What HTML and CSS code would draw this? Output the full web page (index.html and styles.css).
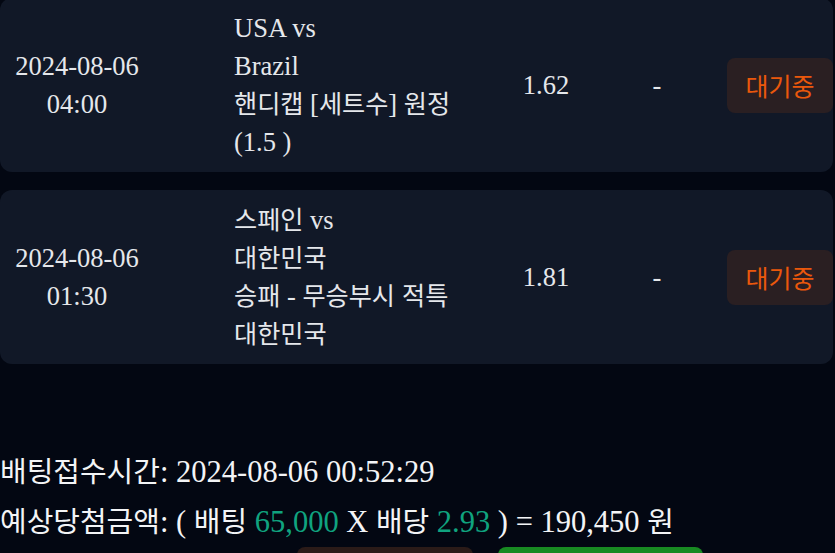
FILE: index.html
```html
<!DOCTYPE html>
<html lang="ko">
<head>
<meta charset="UTF-8">
<meta name="viewport" content="width=device-width, initial-scale=1.0">
<title>배팅내역</title>
<link rel="stylesheet" href="styles.css">
</head>
<body>

<div class="bet-list">
  <div class="bet-row">
    <div class="bet-date">2024-08-06<br>04:00</div>
    <div class="bet-game">
      USA vs<br>
      Brazil<br>
      <span class="ko">핸디캡</span> [<span class="ko">세트수</span>] <span class="ko">원정</span> (1.5 )
    </div>
    <div class="bet-odds">1.62</div>
    <div class="bet-result">-</div>
    <div class="bet-status">대기중</div>
  </div>

  <div class="bet-row">
    <div class="bet-date">2024-08-06<br>01:30</div>
    <div class="bet-game">
      <span class="ko">스페인</span> vs<br>
      <span class="ko">대한민국</span><br>
      <span class="ko">승패</span> - <span class="ko">무승부시 적특</span> <span class="ko">대한민국</span>
    </div>
    <div class="bet-odds">1.81</div>
    <div class="bet-result">-</div>
    <div class="bet-status">대기중</div>
  </div>
</div>

<div class="bet-summary">
  <div class="summary-line"><span class="ko">배팅접수시간</span>: 2024-08-06 00:52:29</div>
  <div class="summary-line">
    <span class="ko">예상당첨금액</span>: ( <span class="ko">배팅</span> <span class="num">65,000</span> X <span class="ko">배당</span> <span class="num">2.93</span> ) = 190,450 <span class="ko">원</span>
  </div>
</div>

<div class="summary-actions">
  <button class="btn btn-cancel"></button>
  <button class="btn btn-ok"></button>
</div>

</body>
</html>
```

FILE: styles.css
```css
body {
  margin: 0;
  height: 100vh;
  background: #030712;
  color: #e5e7eb;
  font-family: "Liberation Serif", "Noto Sans CJK KR", serif;
  overflow: hidden;
}
.ko {
  font-family: "Noto Sans CJK KR", sans-serif;
  font-size: 0.95em;
  line-height: 1;
}
.bet-list {
  margin-top: -2px;
  width: 833px;
}
.bet-row {
  display: grid;
  grid-template-columns: 154px 306px 172px 50px 1fr;
  align-items: center;
  background: #111827;
  border-radius: 12px;
  padding: 11px 0;
  margin-bottom: 18px;
  font-size: 26.5px;
  line-height: 38px;
}
.bet-date {
  text-align: center;
}
.bet-game {
  padding-left: 80px;
}
.bet-odds,
.bet-result {
  text-align: center;
}
.bet-status {
  justify-self: end;
  width: 106px;
  height: 55px;
  display: flex;
  align-items: center;
  justify-content: center;
  background: #2a1f22;
  color: #ea580c;
  border-radius: 8px;
  font-family: "Noto Sans CJK KR", sans-serif;
  font-size: 25px;
}
.bet-summary {
  margin-top: 83px;
  color: #f3f4f6;
  font-size: 30.5px;
}
.summary-line {
  height: 50px;
  line-height: 50px;
  white-space: nowrap;
}
.num {
  color: #10a37f;
}
.summary-actions {
  display: flex;
  gap: 25px;
  padding-left: 297px;
}
.btn {
  height: 40px;
  border: none;
  border-radius: 8px;
}
.btn-cancel {
  width: 176px;
  background: #2b1b18;
}
.btn-ok {
  width: 205px;
  background: #188a22;
}
```
